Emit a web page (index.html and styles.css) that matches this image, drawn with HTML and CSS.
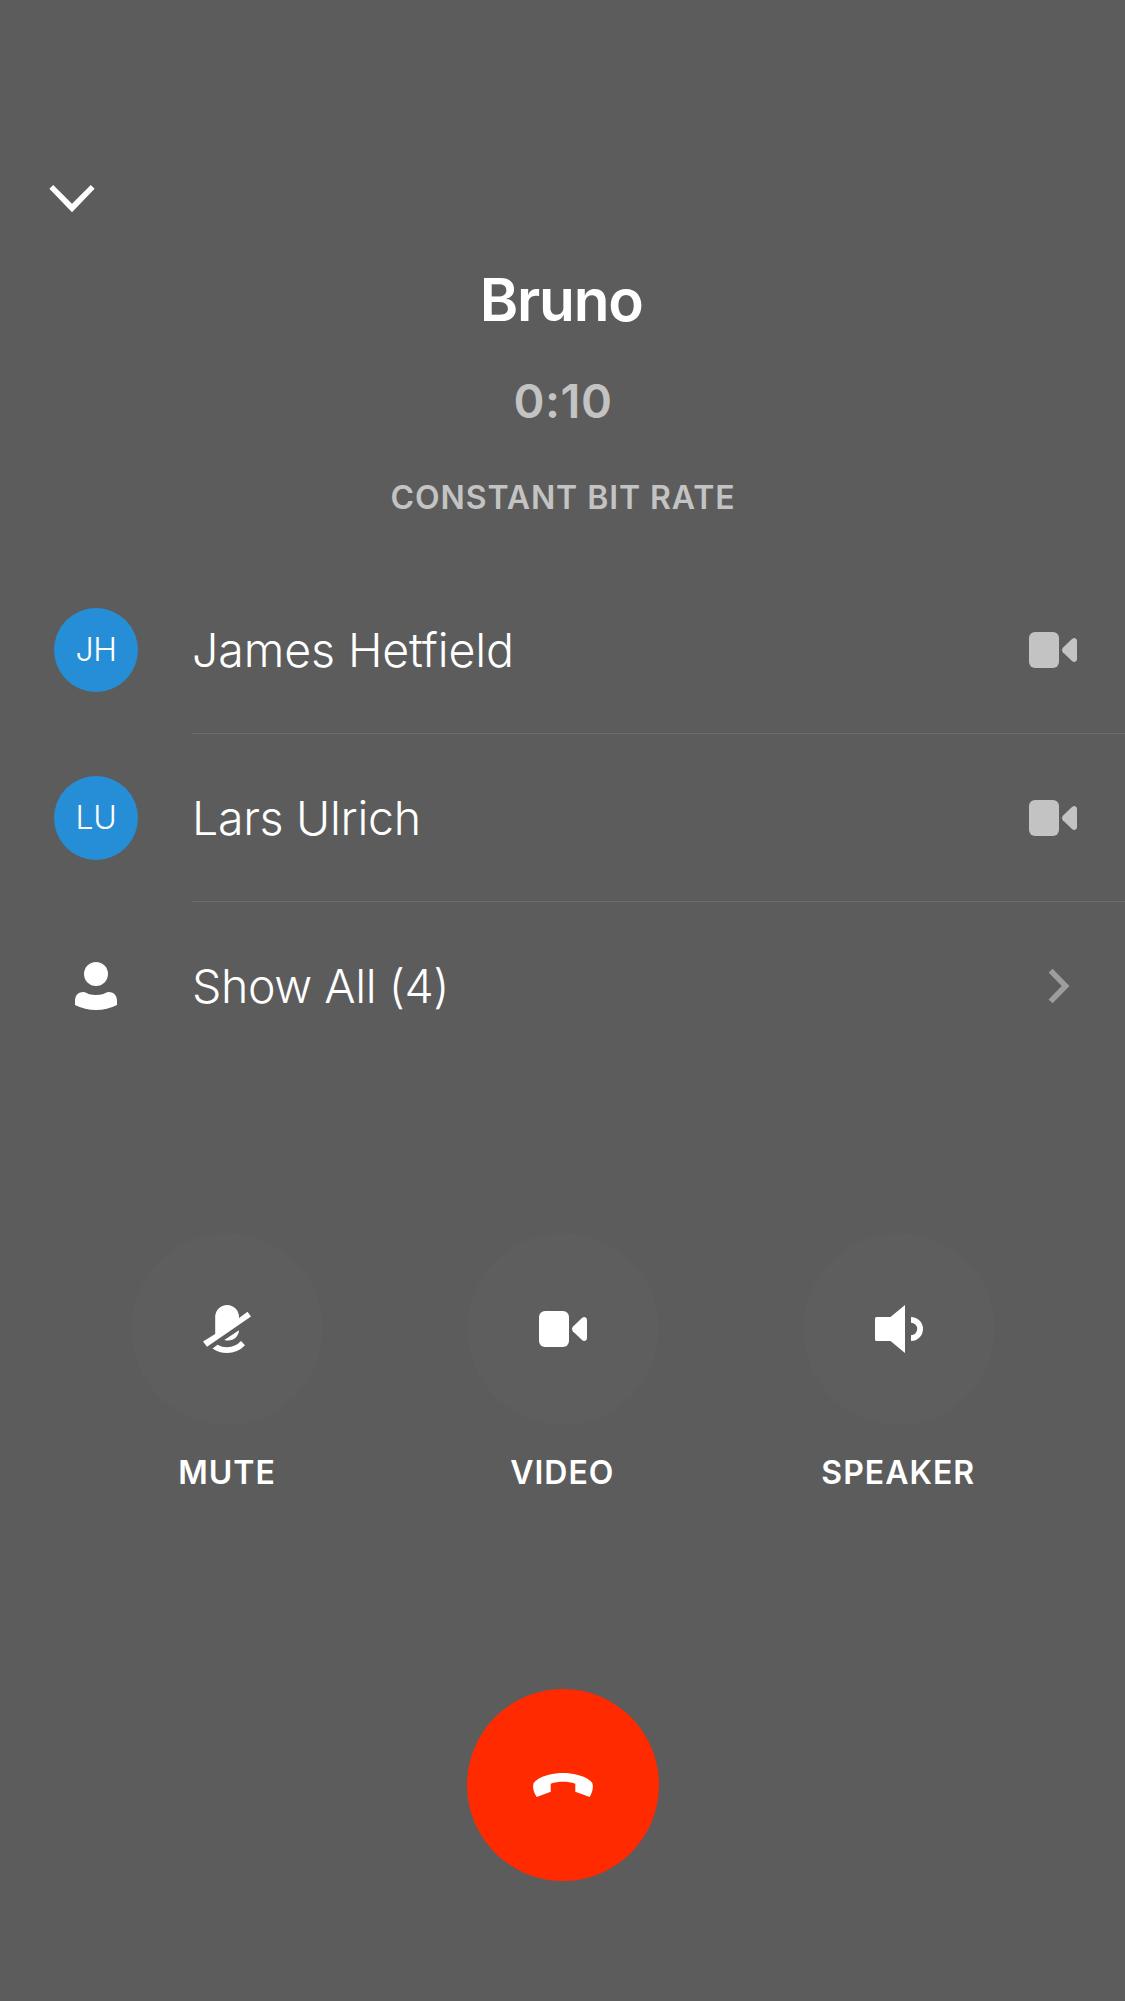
FILE: index.html
```html
<!DOCTYPE html>
<html lang="en">
<head>
<meta charset="utf-8">
<title>Call</title>
<link rel="stylesheet" href="styles.css">
</head>
<body>
<main class="call">
  <nav class="topbar">
    <svg class="collapse" viewBox="48 180 48 36"><path fill="#fff" d="M49.4 188.8 53.2 185 72 203.700 90.8 185 94.6 188.8 72 212.200Z"/></svg>
  </nav>
  <header class="status">
    <h1 class="title">Bruno</h1>
    <p class="timer">0:10</p>
    <p class="bitrate">CONSTANT BIT RATE</p>
  </header>
  <ul class="people">
    <li class="person">
      <span class="avatar">JH</span>
      <div class="entry"><span class="name james">James Hetfield</span>
        <svg class="cam" viewBox="0 0 48 36"><rect width="30" height="36" rx="6"/><path d="M33.8 15.8 43 7Q44.5 5.8 46.2 6.2 48 6.8 48 9V27Q48 29.2 46.2 29.8 44.5 30.2 43 29L33.8 20.2Q32 18 33.8 15.8Z"/></svg>
      </div>
    </li>
    <li class="person">
      <span class="avatar">LU</span>
      <div class="entry"><span class="name lars">Lars Ulrich</span>
        <svg class="cam" viewBox="0 0 48 36"><rect width="30" height="36" rx="6"/><path d="M33.8 15.8 43 7Q44.5 5.8 46.2 6.2 48 6.8 48 9V27Q48 29.2 46.2 29.8 44.5 30.2 43 29L33.8 20.2Q32 18 33.8 15.8Z"/></svg>
      </div>
    </li>
    <li class="person">
      <svg class="group" viewBox="0 0 84 84"><circle cx="42" cy="30" r="12"/><path d="M21 61V57C21 51 24.500 48 29.500 48 31.500 48 32.500 49.200 34.500 49.900Q42 52.200 49.500 49.900C51.500 49.200 52.500 48 54.500 48 59.500 48 63 51 63 57V61Q53 66 42 66 31 66 21 61Z"/></svg>
      <div class="entry last"><span class="name all">Show All (4)</span>
        <svg class="more" viewBox="0 0 24 36"><path d="M4.600 .8 21.500 18 4.600 35.200 .6 31.400 13.700 18 .6 4.600Z"/></svg>
      </div>
    </li>
  </ul>
  <section class="controls">
    <div class="control">
      <span class="round"><svg class="glyph" viewBox="0 0 48 48"><path d="M12.200 29V12A11.900 12 0 0 1 36 12V13L44.500 6.700 48 11.600 4 41.700 0 36.500Z"/><path d="M21.300 35 36 25.200C36 31.500 29.500 37.400 21.300 35ZM9.500 43.500 14.500 39.800Q19 42.300 24 42.300 32.500 42 38 36L42 40.200Q34.500 48 24 48 16 48 9.500 43.500Z"/></svg></span>
      <span class="label mute">MUTE</span>
    </div>
    <div class="control">
      <span class="round"><svg class="glyph" viewBox="0 -6 48 48"><rect width="30" height="36" rx="6"/><path d="M33.800 15.800 43 7Q44.500 5.800 46.200 6.200 48 6.800 48 9V27Q48 29.200 46.200 29.800 44.500 30.200 43 29L33.800 20.200Q32 18 33.800 15.800Z"/></svg></span>
      <span class="label video">VIDEO</span>
    </div>
    <div class="control">
      <span class="round"><svg class="glyph" viewBox="0 0 48 48"><path d="M1.500 12H15.500L30 0V48L15.500 36H1.500Q0 36 0 34.500V13.500Q0 12 1.500 12ZM36 12A12 12 0 0 1 36 36V30.200A6.200 6.200 0 0 0 36 17.800Z"/></svg></span>
      <span class="label speaker">SPEAKER</span>
    </div>
  </section>
  <footer class="hangup">
    <span class="end"><svg class="phone" viewBox="0 0 60 24"><path d="M3.700 24C.8 20 0 15.500 .1 12.800Q.2 9.500 3 7.500C10 2.300 20 0 30 0S50 2.300 57 7.500Q59.800 9.500 59.900 12.800C60 15.500 59.200 20 56.700 24L42.300 18.700V10.800C34.500 8.200 25.500 8.200 17.700 10.800V18.700Z"/></svg></span>
  </footer>
</main>
</body>
</html>
```
FILE: styles.css
```css
* { box-sizing: border-box; margin: 0; padding: 0; }
body {
  background: #5c5c5c;
  color: #fff;
  font-family: Inter, "Liberation Sans", sans-serif;
}
svg { display: block; fill: currentColor; flex: none; }
.call { width: 1125px; height: 2001px; overflow: hidden; display: flex; flex-direction: column; }
.topbar { height: 260px; padding: 180px 0 0 48px; flex: none; }
.collapse { width: 48px; height: 36px; }
.status { height: 306px; flex: none; text-align: center; }
.title { font-size: 58.5px; line-height: 80px; font-weight: 600; letter-spacing: -1.2px; padding-right: 2.5px; }
.timer { font-size: 47px; line-height: 62px; margin-top: 30px; font-weight: 600; color: #c3c3c3; letter-spacing: .5px; padding-left: 1px; }
.bitrate { font-size: 32px; line-height: 40px; margin-top: 46px; font-weight: 600; color: #c3c3c3; letter-spacing: .93px; padding-left: 1px; }
.people { list-style: none; flex: none; }
.person { display: flex; align-items: center; height: 168px; padding-left: 54px; }
.avatar {
  width: 84px; height: 84px; border-radius: 50%; background: #268ed6;
  font-size: 32px; line-height: 84px; font-weight: 300; text-align: center; letter-spacing: -.4px;
}
.group { width: 84px; height: 84px; }
.entry {
  flex: 1; height: 168px; margin-left: 54px; padding-right: 48px;
  display: flex; align-items: center; justify-content: space-between;
  box-shadow: inset 0 -1px #6c6c6c;
}
.entry.last { box-shadow: none; padding-right: 53px; }
.name { font-size: 46.5px; font-weight: 300; line-height: 60px; white-space: nowrap; }
.james { letter-spacing: -.1px; }
.lars { letter-spacing: -.3px; }
.all { letter-spacing: -.42px; }
.cam { width: 48px; height: 36px; color: #c3c3c3; }
.more { width: 24px; height: 36px; color: #9d9d9d; }
.controls { display: flex; gap: 144px; padding: 163px 0 0 131px; height: 619px; flex: none; }
.control { width: 192px; display: flex; flex-direction: column; align-items: center; }
.round { width: 192px; height: 192px; border-radius: 50%; background: #5e5e5e; display: grid; place-items: center; flex: none; }
.glyph { width: 48px; height: 48px; }
.label { font-size: 32px; line-height: 40px; margin-top: 27.500px; font-weight: 600; letter-spacing: 1px; white-space: nowrap; }
.video, .speaker { padding-right: 1.5px; }
.hangup { padding-left: 467px; }
.end { width: 192px; height: 192px; border-radius: 50%; background: #ff2a00; display: grid; place-items: center; }
.phone { width: 60px; height: 24px; }
```
